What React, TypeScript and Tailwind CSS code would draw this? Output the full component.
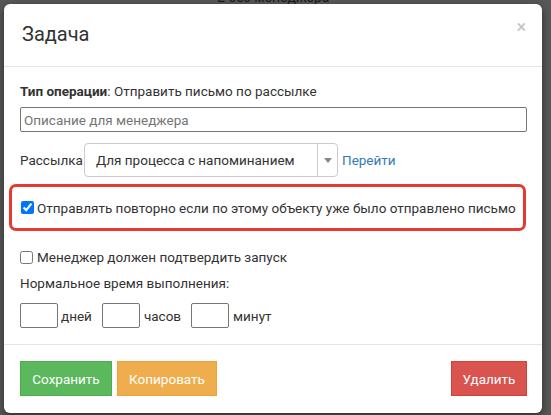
export default function App() {
  return (
    <div
      className="w-[551px] h-[415px] overflow-hidden bg-[#585858] pl-[4px] pt-[4px]"
      style={{ fontFamily: 'Roboto, "Liberation Sans", Arial, sans-serif' }}
    >
      <div className="-mt-[13px] pl-[213px] h-[13px] text-[14px] leading-[13px] text-[#1a1a1a]">
        Е без менеджера
      </div>
      <div className="relative w-[538px] h-[409px] bg-white rounded-[6px] shadow-[0_3px_9px_rgba(0,0,0,0.5)] text-[#333] text-[13.5px] leading-[20px] flex flex-col">
        {/* header */}
        <div className="h-[63px] border-b border-[#e5e5e5] pl-[18px] pr-[16px] flex items-center justify-between">
          <h4 className="text-[20px] leading-[24px] text-[#333] -mt-[2px]">Задача</h4>
          <span className="text-[18px] leading-[18px] text-[#c4c4c4] -mt-[16px]">×</span>
        </div>

        {/* body */}
        <div className="flex-1 pl-[16px] pr-[15px] pt-[14px]">
          <div>
            <b>Тип операции</b>: Отправить письмо по рассылке
          </div>
          <input
            className="mt-[6px] w-full h-[25px] border border-[#767676] rounded-[2px] px-[3px] text-[13.5px] placeholder:text-[#757575] outline-none"
            placeholder="Описание для менеджера"
          />
          <div className="mt-[11px] flex items-center h-[34px]">
            <span className="w-[64px] shrink-0">Рассылка</span>
            <div className="w-[254px] h-[34px] border border-[#ccc] rounded-[4px] flex items-stretch">
              <span className="flex-1 pl-[11px] flex items-center text-[#333]">
                Для процесса с напоминанием
              </span>
              <span className="w-[20px] border-l border-[#ccc] flex items-center justify-center">
                <svg width="8" height="5" viewBox="0 0 8 5">
                  <path d="M0 0h8L4 5z" fill="#888" />
                </svg>
              </span>
            </div>
            <a className="ml-[4px] text-[#337ab7]">Перейти</a>
          </div>

          <div className="mt-[7px] -ml-[11px] w-[517px] h-[47px] border-[3px] border-[#e53a2f] rounded-[7px] flex items-center pl-[9px]">
            <label className="flex items-center gap-[3px] whitespace-nowrap">
              <input type="checkbox" defaultChecked className="w-[13px] h-[13px] m-0 accent-[#0075ff]" />
              <span>Отправлять повторно если по этому объекту уже было отправлено письмо</span>
            </label>
          </div>

          <label className="mt-[16px] flex items-center gap-[4px]">
            <input type="checkbox" className="w-[13px] h-[13px] m-0" />
            <span>Менеджер должен подтвердить запуск</span>
          </label>
          <div className="mt-[6px]">Нормальное время выполнения:</div>
          <div className="mt-[10px] flex items-center">
            <input className="w-[38px] h-[25px] border border-[#767676] rounded-[2px]" />
            <span className="ml-[3px] mr-[10px]">дней</span>
            <input className="w-[38px] h-[25px] border border-[#767676] rounded-[2px]" />
            <span className="ml-[4px] mr-[10px]">часов</span>
            <input className="w-[38px] h-[25px] border border-[#767676] rounded-[2px]" />
            <span className="ml-[4px]">минут</span>
          </div>
        </div>

        {/* footer */}
        <div className="h-[69px] border-t border-[#e5e5e5] pl-[16px] pr-[15px] pt-[16px] flex items-start">
          <button className="h-[35px] w-[92px] bg-[#5cb85c] border border-[#4cae4c] text-white">
            Сохранить
          </button>
          <button className="ml-[5px] h-[35px] w-[100px] bg-[#f0ad4e] border border-[#eea236] text-white">
            Копировать
          </button>
          <button className="ml-auto h-[35px] w-[76px] bg-[#d9534f] border border-[#d43f3a] text-white">
            Удалить
          </button>
        </div>
      </div>
    </div>
  );
}
